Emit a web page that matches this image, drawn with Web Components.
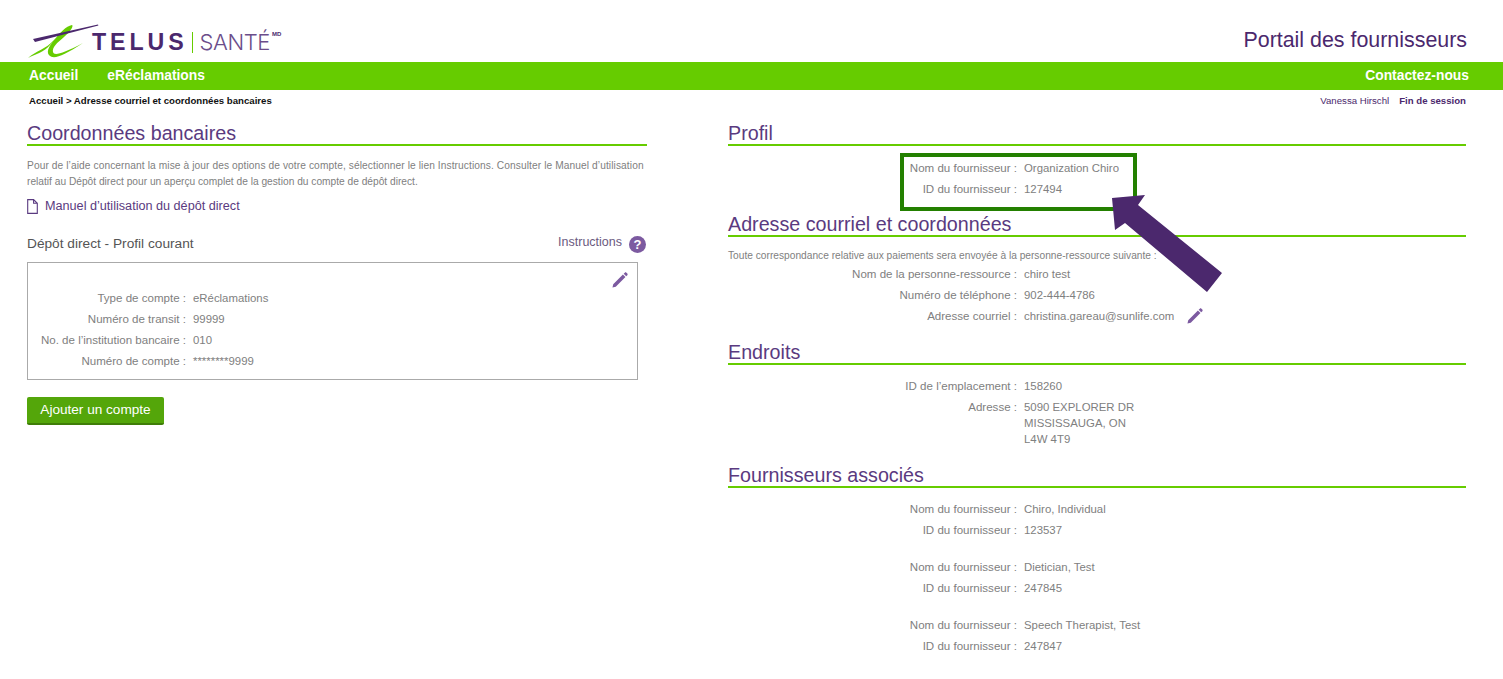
<!DOCTYPE html>
<html lang="fr">
<head>
<meta charset="utf-8">
<title>Portail des fournisseurs</title>
<style>
  html, body { margin: 0; background: #fff; }
  body { font-family: "Liberation Sans", Arial, sans-serif; color: #6f6f6f; }
</style>
</head>
<body>
<portal-header></portal-header>
<nav-bar></nav-bar>
<crumb-bar></crumb-bar>
<main-columns>
  <div slot="left">
    <section-title>Coordonnées bancaires</section-title>
    <bank-panel></bank-panel>
  </div>
  <div slot="right">
    <section-title>Profil</section-title>
    <kv-list style="margin-top:12px">
      <kv-row label="Nom du fournisseur :">Organization Chiro</kv-row>
      <kv-row label="ID du fournisseur :">127494</kv-row>
    </kv-list>
    <section-title style="margin-top:12px">Adresse courriel et coordonnées</section-title>
    <note-text style="margin-top:11px">Toute correspondance relative aux paiements sera envoyée à la personne-ressource suivante :</note-text>
    <kv-list>
      <kv-row label="Nom de la personne-ressource :">chiro test</kv-row>
      <kv-row label="Numéro de téléphone :">902-444-4786</kv-row>
      <kv-row label="Adresse courriel :">christina.gareau@sunlife.com<edit-icon style="margin-left:13px"></edit-icon></kv-row>
    </kv-list>
    <section-title style="margin-top:13px">Endroits</section-title>
    <kv-list style="margin-top:11px">
      <kv-row label="ID de l’emplacement :">158260</kv-row>
      <kv-row label="Adresse :">5090 EXPLORER DR<br>MISSISSAUGA, ON<br>L4W 4T9</kv-row>
    </kv-list>
    <section-title style="margin-top:13px">Fournisseurs associés</section-title>
    <kv-list style="margin-top:11px">
      <kv-row label="Nom du fournisseur :">Chiro, Individual</kv-row>
      <kv-row label="ID du fournisseur :">123537</kv-row>
    </kv-list>
    <kv-list style="margin-top:16px">
      <kv-row label="Nom du fournisseur :">Dietician, Test</kv-row>
      <kv-row label="ID du fournisseur :">247845</kv-row>
    </kv-list>
    <kv-list style="margin-top:16px">
      <kv-row label="Nom du fournisseur :">Speech Therapist, Test</kv-row>
      <kv-row label="ID du fournisseur :">247847</kv-row>
    </kv-list>
  </div>
</main-columns>
<callout-mark></callout-mark>

<script>
class PortalHeader extends HTMLElement {
  constructor() {
    super();
    this.attachShadow({mode: 'open'});
  }
  connectedCallback() {
    this.shadowRoot.innerHTML = `
    <style>
      :host { display: flex; align-items: center; justify-content: space-between; height: 62px; padding: 0 36px 0 27px; box-sizing: border-box; }
      .logo { display: flex; align-items: center; align-self: flex-start; margin-top: 24px; height: 36px; padding-bottom: 2px; box-sizing: content-box; }
      svg { display: block; width: 72px; height: 36px; align-self: flex-start; flex: none; }
      .telus { font: bold 23.2px "Liberation Sans", Arial, sans-serif; letter-spacing: 3.9px; color: #4b286d; margin-left: -7px; line-height: 22px; }
      .bar { width: 1px; height: 21px; background: #66cc00; margin: 0 7px 0 4px; }
      .sante { font: 300 22px Inter, "Liberation Sans", sans-serif; letter-spacing: -.4px; color: #6b4d8a; line-height: 22px; }
      sup { font: bold 6px "Liberation Sans", sans-serif; color: #4b286d; align-self: flex-start; margin: 7px 0 0 2px; }
      .title { font-size: 21.4px; color: #4b286d; font-family: "Liberation Sans", Arial, sans-serif; padding-top: 18px; }
    </style>
    <div class="logo">
      <svg viewBox="27 24 72 36">
        <path d="M28 58C36 51 46 49 54 40C60 33 66 26 72 25C74 26 70 32 64 37C57 43 52 47 53 52C54 56 62 54 83 43C66 54 58 58 52 57C46 55 47 49 52 43C57 36 62 31 68 28C62 32 56 38 50 45C44 52 36 54 28 58Z" fill="#66cc00"/>
        <path d="M33 39L98 24.6L98.4 25.4L35 42Z" fill="#4b286d"/>
      </svg>
      <span class="telus">TELUS</span>
      <span class="bar"></span>
      <span class="sante">SANTÉ</span>
      <sup>MD</sup>
    </div>
    <div class="title">Portail des fournisseurs</div>`;
  }
}

class NavBar extends HTMLElement {
  constructor() {
    super();
    this.attachShadow({mode: 'open'});
  }
  connectedCallback() {
    this.shadowRoot.innerHTML = `
    <style>
      :host { display: flex; align-items: center; height: 26px; padding: 0 34px 2px 29px; background: #66cc00; color: #fff; font: bold 13.85px "Liberation Sans", Arial, sans-serif; }
      a { color: inherit; text-decoration: none; margin-right: 29px; }
      a:last-child { margin: 0 0 0 auto; }
    </style>
    <a href="#">Accueil</a>
    <a href="#">eRéclamations</a>
    <a href="#">Contactez-nous</a>`;
  }
}

class CrumbBar extends HTMLElement {
  constructor() {
    super();
    this.attachShadow({mode: 'open'});
  }
  connectedCallback() {
    this.shadowRoot.innerHTML = `
    <style>
      :host { display: flex; align-items: center; height: 21px; padding: 0 37px 0 29px; font: 9.65px "Liberation Sans", Arial, sans-serif; }
      .path { font-weight: bold; color: #111; flex: 1; }
      .user { color: #4b286d; margin-right: 10px; }
      .out { color: #4b286d; font-weight: bold; }
    </style>
    <span class="path">Accueil &gt; Adresse courriel et coordonnées bancaires</span>
    <span class="user">Vanessa Hirschl</span>
    <span class="out">Fin de session</span>`;
  }
}

class MainColumns extends HTMLElement {
  constructor() {
    super();
    this.attachShadow({mode: 'open'});
  }
  connectedCallback() {
    this.shadowRoot.innerHTML = `
    <style>
      :host { display: grid; grid-template-columns: 620px 738px; column-gap: 81px; padding: 10px 37px 0 27px; }
    </style>
    <div><slot name="left"></slot></div>
    <div><slot name="right"></slot></div>`;
  }
}

class SectionTitle extends HTMLElement {
  constructor() {
    super();
    this.attachShadow({mode: 'open'});
  }
  connectedCallback() {
    this.shadowRoot.innerHTML = `
    <style>
      :host { display: block; height: 23px; line-height: 24px; font-size: 19.7px; color: #5a3a80; border-bottom: 2px solid #66cc00; }
    </style>
    <slot></slot>`;
  }
}

class NoteText extends HTMLElement {
  constructor() {
    super();
    this.attachShadow({mode: 'open'});
  }
  connectedCallback() {
    this.shadowRoot.innerHTML = `
    <style>
      :host { display: block; font-size: 10.2px; line-height: 16px; color: #808080; }
    </style>
    <slot></slot>`;
  }
}

class KvList extends HTMLElement {
  constructor() {
    super();
    this.attachShadow({mode: 'open'});
  }
  connectedCallback() {
    this.shadowRoot.innerHTML = `
    <style>
      :host { display: block; }
    </style>
    <slot></slot>`;
  }
}

class KvRow extends HTMLElement {
  constructor() {
    super();
    this.attachShadow({mode: 'open'});
  }
  connectedCallback() {
    this.shadowRoot.innerHTML = `
    <style>
      :host { display: grid; grid-template-columns: var(--label-w, 289px) 1fr; column-gap: 7px; padding: 2px 0 3px; font-size: 11.4px; line-height: 16px; color: #808080; }
      .label { text-align: right; white-space: nowrap; font-size: 11.55px; }
    </style>
    <div class="label"></div>
    <div><slot></slot></div>`;
    this.shadowRoot.querySelector('.label').textContent = this.getAttribute('label');
  }
}

class EditIcon extends HTMLElement {
  constructor() {
    super();
    this.attachShadow({mode: 'open'});
  }
  connectedCallback() {
    this.shadowRoot.innerHTML = `
    <style>
      :host { display: inline-block; width: 16px; height: 16px; vertical-align: 0; margin-block: -4px; }
      svg { display: block; width: 100%; height: 100%; }
    </style>
    <svg viewBox="0 0 17 17"><path d="M.5 16.5L1.3 13L11.6 2.7L14.3 5.4L4 15.7ZM12.4 1.9L13.6 .7C14.1 .2 14.8 .2 15.3 .7L16.3 1.7C16.8 2.2 16.8 2.9 16.3 3.4L15.1 4.6Z" fill="#7c5aa0"/></svg>`;
  }
}

class HelpIcon extends HTMLElement {
  constructor() {
    super();
    this.attachShadow({mode: 'open'});
  }
  connectedCallback() {
    this.shadowRoot.innerHTML = `
    <style>
      :host { display: inline-flex; align-items: center; justify-content: center; width: 17px; height: 17px; border-radius: 50%; background: #7c5aa0; color: #fff; font: bold 13px "Liberation Sans", Arial, sans-serif; margin: 3px 1px 0 0; }
    </style>
    ?`;
  }
}

class BankPanel extends HTMLElement {
  constructor() {
    super();
    this.attachShadow({mode: 'open'});
  }
  connectedCallback() {
    this.shadowRoot.innerHTML = `
    <style>
      :host { display: block; }
      .wide { letter-spacing: .09px; }
      .manual { display: flex; align-items: center; gap: 7px; margin-top: 6px; height: 20px; font-size: 12.65px; color: #5a3a80; }
      .manual svg { width: 11px; height: 15px; display: block; }
      .head { display: flex; align-items: center; justify-content: space-between; height: 24px; margin-top: 15px; }
      .head b { font-weight: normal; font-size: 13.7px; color: #555; }
      .help { display: flex; align-items: center; gap: 7px; font-size: 12.5px; color: #6b5a80; margin-top: -1px; }
      .help span { margin-top: -2px; }
      .card { position: relative; box-sizing: border-box; width: 611px; height: 118px; margin-top: 7px; border: 1px solid #aaa; padding: 25px 0 0; --label-w: 158px; }
      .card edit-icon { position: absolute; top: 9px; right: 9px; margin: 0; }
      button { display: block; margin-top: 17px; width: 137px; height: 28px; border: 0; border-bottom: 2px solid #3f7d08; border-radius: 2px; background: #54a60a; color: #fff; font: 13.6px "Liberation Sans", Arial, sans-serif; padding: 0 0 1px; }
    </style>
    <note-text style="margin-top:12px"><span class="wide">Pour de l’aide concernant la mise à jour des options de votre compte, sélectionner le lien Instructions. Consulter le Manuel d’utilisation</span><br>relatif au Dépôt direct pour un aperçu complet de la gestion du compte de dépôt direct.</note-text>
    <div class="manual">
      <svg viewBox="0 0 11 15"><path d="M.7 .6H6.6L10.3 4.3V14.4H.7ZM6.6 .6V4.3H10.3" fill="none" stroke="#5a3a80" stroke-width="1.1"/></svg>
      Manuel d’utilisation du dépôt direct
    </div>
    <div class="head">
      <b>Dépôt direct - Profil courant</b>
      <span class="help"><span>Instructions</span> <help-icon></help-icon></span>
    </div>
    <div class="card">
      <edit-icon></edit-icon>
      <kv-row label="Type de compte :">eRéclamations</kv-row>
      <kv-row label="Numéro de transit :">99999</kv-row>
      <kv-row label="No. de l’institution bancaire :">010</kv-row>
      <kv-row label="Numéro de compte :">********9999</kv-row>
    </div>
    <button>Ajouter un compte</button>`;
  }
}

// annotation drawn over the page: green box and purple arrow
class CalloutMark extends HTMLElement {
  constructor() {
    super();
    this.attachShadow({mode: 'open'});
  }
  connectedCallback() {
    this.shadowRoot.innerHTML = `
    <style>
      :host { display: block; position: absolute; left: 900px; top: 153px; width: 330px; height: 145px; pointer-events: none; }
      .box { position: absolute; left: 0; top: 0; width: 237px; height: 58px; box-sizing: border-box; border: 4px solid #238000; }
      svg { position: absolute; left: 0; top: 0; width: 330px; height: 145px; }
    </style>
    <div class="box"></div>
    <svg viewBox="0 0 330 145"><polygon points="212,45 245,42 238,52 322,120 307,139 225,70 215,77" fill="#4b286d"/></svg>`;
  }
}

customElements.define('portal-header', PortalHeader);
customElements.define('nav-bar', NavBar);
customElements.define('crumb-bar', CrumbBar);
customElements.define('main-columns', MainColumns);
customElements.define('section-title', SectionTitle);
customElements.define('note-text', NoteText);
customElements.define('kv-list', KvList);
customElements.define('kv-row', KvRow);
customElements.define('edit-icon', EditIcon);
customElements.define('help-icon', HelpIcon);
customElements.define('bank-panel', BankPanel);
customElements.define('callout-mark', CalloutMark);
</script>
</body>
</html>
